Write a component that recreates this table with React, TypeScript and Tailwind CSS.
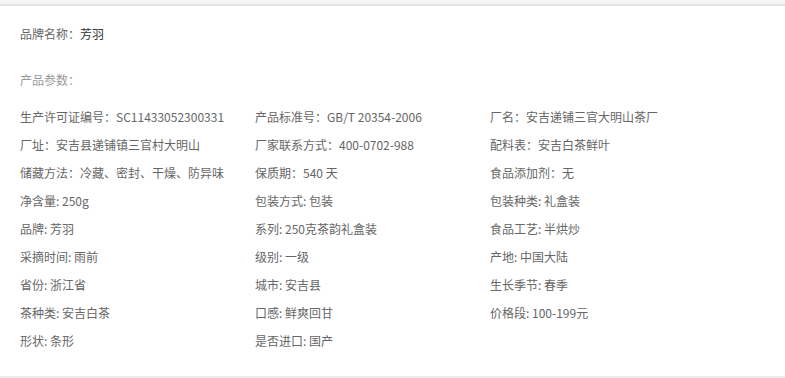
const params: string[] = [
  "生产许可证编号：SC11433052300331",
  "产品标准号：GB/T 20354-2006",
  "厂名：安吉递铺三官大明山茶厂",
  "厂址：安吉县递铺镇三官村大明山",
  "厂家联系方式：400-0702-988",
  "配料表：安吉白茶鲜叶",
  "储藏方法：冷藏、密封、干燥、防异味",
  "保质期：540 天",
  "食品添加剂：无",
  "净含量: 250g",
  "包装方式: 包装",
  "包装种类: 礼盒装",
  "品牌: 芳羽",
  "系列: 250克茶韵礼盒装",
  "食品工艺: 半烘炒",
  "采摘时间: 雨前",
  "级别: 一级",
  "产地: 中国大陆",
  "省份: 浙江省",
  "城市: 安吉县",
  "生长季节: 春季",
  "茶种类: 安吉白茶",
  "口感: 鲜爽回甘",
  "价格段: 100-199元",
  "形状: 条形",
  "是否进口: 国产",
];

export default function App() {
  return (
    <div
      className="w-[785px] h-[378px] bg-white text-[12px] text-[#666]"
      style={{ fontFamily: '"Noto Sans CJK SC", "Noto Sans", sans-serif' }}
    >
      <div className="h-1 bg-[#f5f5f5]" />
      <div className="border-t-2 border-[#e4e4e4] border-b-2 border-b-[#ececec] h-[374px] pl-5 pt-[14px]">
        {/* brand */}
        <div className="h-7 leading-7">
          品牌名称：<span className="text-[#333]">芳羽</span>
        </div>

        <div className="mt-[18px] h-7 leading-7 text-[#999]">产品参数：</div>

        <div className="mt-[9px] grid grid-cols-[235px_235px_235px]">
          {params.map((p) => (
            <div key={p} className="h-7 leading-7 whitespace-nowrap">
              {p}
            </div>
          ))}
        </div>
      </div>
    </div>
  );
}
